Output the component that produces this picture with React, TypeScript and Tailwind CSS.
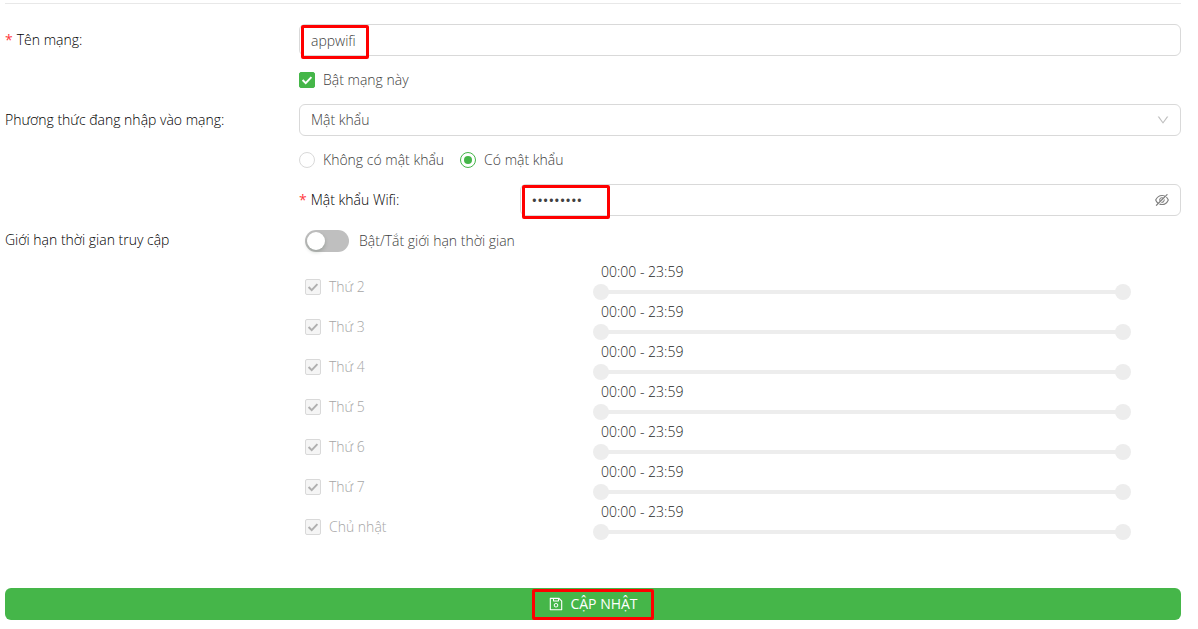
import { useState } from "react";
import type { ReactNode } from "react";
import { AiOutlineDown, AiOutlineEyeInvisible, AiOutlineSave } from "react-icons/ai";

const DAYS = ["Thứ 2", "Thứ 3", "Thứ 4", "Thứ 5", "Thứ 6", "Thứ 7", "Chủ nhật"];
const LAST_MINUTE = 1439;

const FIELD =
  "block h-8 w-full appearance-none rounded-md border border-[#d9d9d9] bg-white px-[11px] outline-none focus:border-[#45b649]";

const RANGE =
  "pointer-events-none col-start-1 row-start-1 m-0 h-4 w-full appearance-none bg-transparent [&::-webkit-slider-thumb]:pointer-events-auto [&::-webkit-slider-thumb]:size-4 [&::-webkit-slider-thumb]:appearance-none [&::-webkit-slider-thumb]:rounded-full [&::-webkit-slider-thumb]:bg-[#ededed]";

function Required() {
  return (
    <span className="mr-1 font-normal text-[#ff3b3e]" aria-hidden="true">
      *
    </span>
  );
}

function CheckBox({
  label,
  checked,
  disabled,
  onChange,
}: {
  label: string;
  checked: boolean;
  disabled?: boolean;
  onChange: (value: boolean) => void;
}) {
  return (
    <label className={disabled ? "flex h-8 items-center gap-2 text-[#a6a6a6]" : "flex h-8 items-center gap-2"}>
      <span className="grid size-4">
        <input
          type="checkbox"
          checked={checked}
          disabled={disabled}
          onChange={(e) => onChange(e.target.checked)}
          className="peer col-start-1 row-start-1 size-4 appearance-none rounded-xs border border-[#d9d9d9] bg-white checked:border-[#45b649] checked:bg-[#45b649] disabled:border-[#d9d9d9] disabled:bg-[#f5f5f5]"
        />
        <svg
          viewBox="0 0 16 16"
          className="pointer-events-none invisible col-start-1 row-start-1 size-4 fill-none stroke-white stroke-2 peer-checked:visible peer-disabled:stroke-[#b0b0b0]"
          aria-hidden="true"
        >
          <path d="M3.6 8 6.7 11.1 12.4 5.1" />
        </svg>
      </span>
      {label}
    </label>
  );
}

function Radio({ label, checked, onChange }: { label: string; checked: boolean; onChange: () => void }) {
  return (
    <label className="flex items-center gap-2">
      <input
        type="radio"
        name="protection"
        checked={checked}
        onChange={onChange}
        className="grid size-4 appearance-none place-items-center rounded-full border border-[#d9d9d9] bg-white before:size-2 before:rounded-full checked:border-[#45b649] checked:before:bg-[#45b649]"
      />
      {label}
    </label>
  );
}

function clock(minutes: number) {
  const h = String(Math.floor(minutes / 60)).padStart(2, "0");
  const m = String(minutes % 60).padStart(2, "0");
  return `${h}:${m}`;
}

function DayRow({ day, enabled }: { day: string; enabled: boolean }) {
  const [active, setActive] = useState(true);
  const [from, setFrom] = useState(0);
  const [to, setTo] = useState(LAST_MINUTE);
  return (
    <div className="grid h-10 grid-cols-3 items-start">
      <div className="pt-[9px] pl-1.5">
        <CheckBox label={day} checked={active} disabled={!enabled} onChange={setActive} />
      </div>
      <div className="col-span-2 pr-[50px]">
        <div className="mb-0.5 pl-2 leading-5 text-[#262626]">
          {clock(from)} - {clock(to)}
        </div>
        <div className="grid items-center">
          <span className="col-start-1 row-start-1 mx-2 h-1 rounded-xs bg-[#ededed]" />
          <input
            type="range"
            aria-label={`${day} – từ`}
            min={0}
            max={LAST_MINUTE}
            value={from}
            disabled={!enabled}
            onChange={(e) => setFrom(Math.min(Number(e.target.value), to))}
            className={RANGE}
          />
          <input
            type="range"
            aria-label={`${day} – đến`}
            min={0}
            max={LAST_MINUTE}
            value={to}
            disabled={!enabled}
            onChange={(e) => setTo(Math.max(Number(e.target.value), from))}
            className={RANGE}
          />
        </div>
      </div>
    </div>
  );
}

function Row({ label, children }: { label: ReactNode; children: ReactNode }) {
  return (
    <div className="grid grid-cols-4">
      <div className="flex h-8 items-center text-black">{label}</div>
      <div className="col-span-3">{children}</div>
    </div>
  );
}

export default function App() {
  const [name, setName] = useState("appwifi");
  const [on, setOn] = useState(true);
  const [secured, setSecured] = useState(true);
  const [password, setPassword] = useState("matkhau12");
  const [visible, setVisible] = useState(false);
  const [limited, setLimited] = useState(false);

  return (
    <form
      onSubmit={(e) => e.preventDefault()}
      className="mr-[17px] ml-[5px] pt-[3px] font-['Open_Sans','Noto_Sans',sans-serif] text-sm font-light text-[#404040]"
    >
      <hr className="mb-5 border-t border-[#e8e8e8]" />

      <div className="flex flex-col gap-2">
        <Row
          label={
            <label htmlFor="network">
              <Required />
              Tên mạng:
            </label>
          }
        >
          <div className="relative">
            <input id="network" value={name} onChange={(e) => setName(e.target.value)} className={FIELD} />
            <span className="pointer-events-none absolute top-px left-0.5 h-[34px] w-17 rounded-xs border-3 border-[#f00]" />
          </div>
          <div className="mt-2">
            <CheckBox label="Bật mạng này" checked={on} onChange={setOn} />
          </div>
        </Row>

        <Row label={<label htmlFor="method">Phương thức đang nhập vào mạng:</label>}>
          <div className="relative">
            <select id="method" className={FIELD}>
              <option>Mật khẩu</option>
            </select>
            <AiOutlineDown className="pointer-events-none absolute top-[9px] right-[11px] size-3.5 text-[#bfbfbf]" />
          </div>
          <div className="mt-2 flex h-8 items-center gap-4">
            <Radio label="Không có mật khẩu" checked={!secured} onChange={() => setSecured(false)} />
            <Radio label="Có mật khẩu" checked={secured} onChange={() => setSecured(true)} />
          </div>
          <div className="mt-2 grid grid-cols-4 items-center">
            <label htmlFor="password" className="text-black">
              <Required />
              Mật khẩu Wifi:
            </label>
            <div className="relative col-span-3">
              <input
                id="password"
                type={visible ? "text" : "password"}
                value={password}
                onChange={(e) => setPassword(e.target.value)}
                className={FIELD + " text-[15px] font-normal"}
              />
              <button
                type="button"
                aria-label="Hiện mật khẩu"
                onClick={() => setVisible(!visible)}
                className="absolute top-2 right-[11px] text-[#808080]"
              >
                <AiOutlineEyeInvisible className="size-4" />
              </button>
              <span className="pointer-events-none absolute top-px left-0.5 h-[34px] w-22 rounded-xs border-3 border-[#f00]" />
            </div>
          </div>
        </Row>

        <Row label="Giới hạn thời gian truy cập">
          <label className="flex h-[34px] items-center gap-2.5 pl-1.5">
            <input
              type="checkbox"
              role="switch"
              checked={limited}
              onChange={(e) => setLimited(e.target.checked)}
              className="flex h-[22px] w-11 appearance-none items-center rounded-full bg-[#bfbfbf] px-0.5 before:size-[18px] before:rounded-full before:bg-white before:shadow-[0_2px_4px_rgba(0,35,11,0.2)] checked:justify-end checked:bg-[#45b649]"
            />
            Bật/Tắt giới hạn thời gian
          </label>
          <div className="mt-1">
            {DAYS.map((day) => (
              <DayRow key={day} day={day} enabled={limited} />
            ))}
          </div>
        </Row>
      </div>

      <button
        type="submit"
        className="mt-[46px] flex h-8 w-full items-center justify-center rounded-md bg-[#45b649] font-normal text-white"
      >
        <span className="relative flex h-8 items-center gap-1.5 px-4">
          <AiOutlineSave className="size-4" />
          CẬP NHẬT
          <span className="pointer-events-none absolute inset-x-0 top-px bottom-0 rounded-xs border-3 border-[#f00]" />
        </span>
      </button>
    </form>
  );
}
